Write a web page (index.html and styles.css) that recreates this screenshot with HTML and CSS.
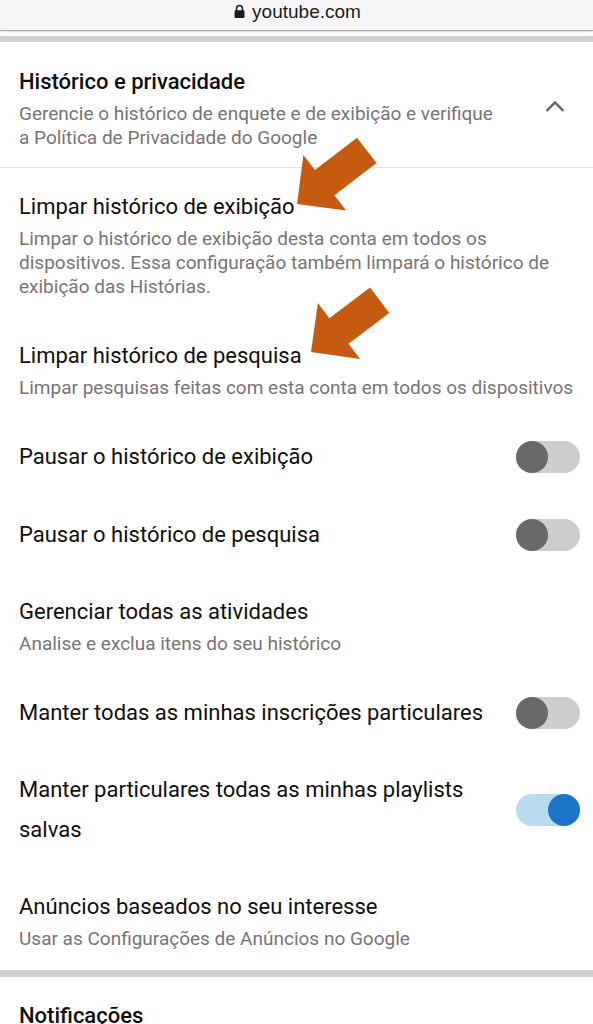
FILE: index.html
```html
<!DOCTYPE html>
<html lang="pt-BR">
<head>
<meta charset="utf-8">
<title>Histórico e privacidade</title>
<link rel="stylesheet" href="styles.css">
</head>
<body>
<div class="urlbar">
  <span class="url">
    <svg class="lock" width="11" height="14" viewBox="0 0 11 14"><path d="M2.6 7V4.4a2.9 2.9 0 0 1 5.8 0V7" fill="none" stroke="#1c1c1c" stroke-width="1.6"/><rect x="0.5" y="6.3" width="10" height="7.7" rx="1.3" fill="#1c1c1c"/></svg>
    youtube.com
  </span>
</div>
<div class="band band-top"></div>

<section class="header">
  <div class="header-text">
    <div class="title strong">Histórico e privacidade</div>
    <div class="desc">Gerencie o histórico de enquete e de exibição e verifique a Política de Privacidade do Google</div>
  </div>
  <svg class="chevron" width="20" height="13" viewBox="0 0 20 13"><path d="M1.5 11L10 2.5L18.5 11" fill="none" stroke="#606060" stroke-width="2.4"/></svg>
</section>

<div class="list">
  <div class="row">
    <div class="title">Limpar histórico de exibição</div>
    <div class="desc">Limpar o histórico de exibição desta conta em todos os dispositivos. Essa configuração também limpará o histórico de exibição das Histórias.</div>
  </div>
  <div class="row">
    <div class="title">Limpar histórico de pesquisa</div>
    <div class="desc">Limpar pesquisas feitas com esta conta em todos os dispositivos</div>
  </div>
  <div class="row toggle-row">
    <div class="title">Pausar o histórico de exibição</div>
    <div class="switch"><span class="knob"></span></div>
  </div>
  <div class="row toggle-row">
    <div class="title">Pausar o histórico de pesquisa</div>
    <div class="switch"><span class="knob"></span></div>
  </div>
  <div class="row">
    <div class="title">Gerenciar todas as atividades</div>
    <div class="desc">Analise e exclua itens do seu histórico</div>
  </div>
  <div class="row toggle-row">
    <div class="title">Manter todas as minhas inscrições particulares</div>
    <div class="switch"><span class="knob"></span></div>
  </div>
  <div class="row toggle-row">
    <div class="title">Manter particulares todas as minhas playlists salvas</div>
    <div class="switch on"><span class="knob"></span></div>
  </div>
  <div class="row">
    <div class="title">Anúncios baseados no seu interesse</div>
    <div class="desc">Usar as Configurações de Anúncios no Google</div>
  </div>
</div>

<div class="band band-bottom"></div>

<div class="row">
  <div class="title strong">Notificações</div>
</div>

<svg class="arrows" width="593" height="1024" viewBox="0 0 593 1024">
  <polygon points="0,0 -35,-35 -35,-16 -88,-16 -88,16 -35,16 -35,35" fill="#c55a11" transform="translate(297 204) rotate(142.4)"/>
  <polygon points="0,0 -35,-35 -35,-16 -86,-16 -86,16 -35,16 -35,35" fill="#c55a11" transform="translate(311 352) rotate(143)"/>
</svg>
</body>
</html>
```

FILE: styles.css
```css
* { box-sizing: border-box; }

body {
  margin: 0;
  background: #fff;
  font-family: Roboto, "Noto Sans", sans-serif;
  color: #0f0f0f;
  position: relative;
  overflow: hidden;
}

.urlbar {
  height: 31px;
  background: #f6f6f6;
  border-bottom: 1px solid #a8a8a8;
  box-shadow: 0 1px 2px rgba(0, 0, 0, 0.12);
  display: flex;
  justify-content: center;
  margin-bottom: 5px;
}

.url {
  display: flex;
  align-items: center;
  gap: 7px;
  height: 24px;
  font-family: "Liberation Sans", Arial, sans-serif;
  font-size: 19px;
  line-height: 24px;
  color: #1c1c1c;
  padding-left: 2px;
}

.lock { flex: none; margin-top: -2px; }

.band {
  height: 6px;
  background: #d0d0d0;
}

.band-bottom { height: 7px; }

.header {
  display: flex;
  align-items: center;
  justify-content: space-between;
  padding: 20px 28px 17px 19px;
  border-bottom: 1px solid #e2e2e2;
}

.header-text { max-width: 482px; }

.chevron { flex: none; }

.title {
  font-size: 22px;
  line-height: 40px;
  color: #0f0f0f;
}

.title.strong { font-weight: 500; }

.desc {
  font-size: 19px;
  line-height: 24px;
  color: #757575;
}

.row {
  padding: 19px 12px 18.2px 19px;
}

.toggle-row {
  display: flex;
  align-items: center;
  gap: 16px;
}

.toggle-row .title { flex: 1; }

.switch {
  flex: none;
  width: 64px;
  height: 32px;
  border-radius: 16px;
  background: #cdcdcd;
  display: flex;
  justify-content: flex-start;
  margin-right: 1px;
}

.knob {
  width: 32px;
  height: 32px;
  border-radius: 50%;
  background: #686868;
}

.switch.on {
  background: #badaf0;
  justify-content: flex-end;
}

.switch.on .knob { background: #1a75c7; }

.arrows {
  position: absolute;
  top: 0;
  left: 0;
  pointer-events: none;
}
```
